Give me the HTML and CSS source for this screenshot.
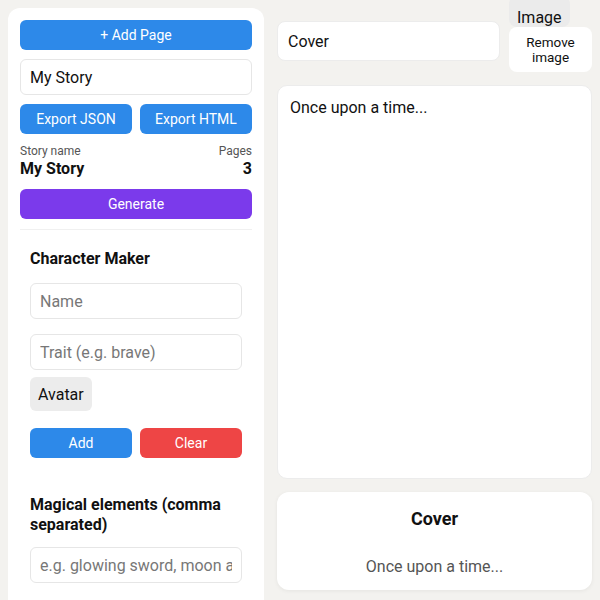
FILE: index.html
```html
<!DOCTYPE html>
<html>
<head>
<meta charset="utf-8">
<link rel="stylesheet" href="styles.css">
</head>
<body>
<div class="app">
  <aside class="sidebar">
    <button class="btn btn-blue">+ Add Page</button>
    <input class="field story-field" type="text" value="My Story">
    <div class="row2">
      <button class="btn btn-blue">Export JSON</button>
      <button class="btn btn-blue">Export HTML</button>
    </div>
    <div class="stats">
      <div class="stat">
        <div class="stat-label">Story name</div>
        <div class="stat-value">My Story</div>
      </div>
      <div class="stat stat-right">
        <div class="stat-label">Pages</div>
        <div class="stat-value">3</div>
      </div>
    </div>
    <button class="btn btn-purple">Generate</button>
    <div class="divider"></div>
    <section class="section char">
      <h3 class="sec-title">Character Maker</h3>
      <input class="field f-name" type="text" placeholder="Name">
      <input class="field f-trait" type="text" placeholder="Trait (e.g. brave)">
      <button class="avatar">Avatar</button>
      <div class="row2 char-actions">
        <button class="btn btn-blue">Add</button>
        <button class="btn btn-red">Clear</button>
      </div>
    </section>
    <section class="section magic">
      <h3 class="sec-title">Magical elements (comma separated)</h3>
      <input class="field f-magic" type="text" placeholder="e.g. glowing sword, moon amulet">
    </section>
  </aside>
  <main class="main">
    <div class="page-head">
      <input class="field cover-field" type="text" value="Cover">
      <div class="img-col">
        <span class="img-label">Image</span>
        <button class="remove-btn">Remove<br>image</button>
      </div>
    </div>
    <textarea class="story-text">Once upon a time...</textarea>
    <div class="preview">
      <h2 class="preview-title">Cover</h2>
      <p class="preview-text">Once upon a time...</p>
    </div>
  </main>
</div>
</body>
</html>
```
FILE: styles.css
```css
* { box-sizing: border-box; }
html, body { margin: 0; padding: 0; }
body {
  background: #f3f2ef;
  font-family: Roboto, "Liberation Sans", sans-serif;
  color: #111;
  overflow: hidden;
  height: 600px;
}
.app {
  display: flex;
  gap: 13px;
  padding: 8px 8px 0 8px;
  height: 600px;
  overflow: hidden;
}
.sidebar {
  width: 256px;
  flex: none;
  background: #fff;
  border-radius: 12px 12px 0 0;
  padding: 12px;
  display: flex;
  flex-direction: column;
  gap: 9px;
  height: 592px;
}
.btn {
  font-family: inherit;
  font-size: 14px;
  color: #fff;
  border: none;
  border-radius: 6px;
  height: 30px;
  padding: 0;
  cursor: pointer;
}
.btn-blue { background: #2d89e9; }
.btn-purple { background: #7b3aeb; }
.btn-red { background: #ee4545; }
.field {
  font-family: inherit;
  font-size: 16px;
  color: #111;
  background: #fff;
  border: 1px solid #e6e6e6;
  border-radius: 6px;
  height: 36px;
  padding: 0 9px;
  width: 100%;
  outline: none;
  flex: none;
}
.field::placeholder { color: #777; }
.row2 {
  display: grid;
  grid-template-columns: 1fr 1fr;
  gap: 8px;
}
.stats {
  display: flex;
  justify-content: space-between;
  height: 36px;
  margin-top: 1px;
}
.stat-label {
  font-size: 12px;
  line-height: 15px;
  color: #555;
}
.stat-value {
  font-size: 16px;
  font-weight: 700;
  line-height: 20px;
}
.stat-right { text-align: right; }
.divider {
  height: 1px;
  background: #f0f0f0;
  margin-top: 1px;
  flex: none;
}
.section {
  padding: 0 10px;
  display: flex;
  flex-direction: column;
}
.sec-title {
  margin: 0;
  font-size: 16px;
  font-weight: 700;
  line-height: 20px;
}
.char { padding-top: 10px; }
.f-name { margin-top: 14px; }
.f-trait { margin-top: 15px; }
.avatar {
  align-self: flex-start;
  margin-top: 7px;
  background: #ececec;
  border: none;
  border-radius: 6px;
  font-family: inherit;
  font-size: 16px;
  color: #111;
  height: 34px;
  padding: 0 8px;
}
.char-actions { margin-top: 17px; }
.magic { padding-top: 28px; }
.f-magic { margin-top: 12px; }

.main {
  flex: 1;
  display: flex;
  flex-direction: column;
  gap: 13px;
}
.page-head {
  display: flex;
  gap: 9px;
  margin-top: -12px;
  align-items: flex-start;
}
.cover-field {
  flex: 1;
  height: 40px;
  border-radius: 8px;
  margin-top: 25px;
  padding: 0 10px;
  border-color: #ececec;
}
.img-col {
  width: 83px;
  flex: none;
  display: flex;
  flex-direction: column;
  align-items: flex-start;
}
.img-label {
  background: #ebebeb;
  border-radius: 8px;
  font-size: 16px;
  line-height: 19px;
  padding: 12px 8px 0 8px;
  width: 61px;
}
.remove-btn {
  width: 83px;
  height: 45px;
  background: #fff;
  border: none;
  border-radius: 8px;
  font-family: inherit;
  font-size: 13.5px;
  line-height: 15px;
  color: #111;
  padding: 0;
}
.story-text {
  height: 394px;
  width: 100%;
  resize: none;
  border: 1px solid #ececec;
  border-radius: 10px;
  background: #fff;
  font-family: inherit;
  font-size: 16px;
  color: #111;
  padding: 12px 12px;
  outline: none;
}
.preview {
  height: 98px;
  background: #fff;
  border-radius: 12px;
  box-shadow: 0 1px 4px rgba(0,0,0,0.06);
  text-align: center;
  padding-top: 16px;
}
.preview-title {
  margin: 0;
  font-size: 18px;
  font-weight: 700;
  line-height: 22px;
}
.preview-text {
  margin: 27px 0 0 0;
  font-size: 16px;
  line-height: 20px;
  color: #555;
}
```
